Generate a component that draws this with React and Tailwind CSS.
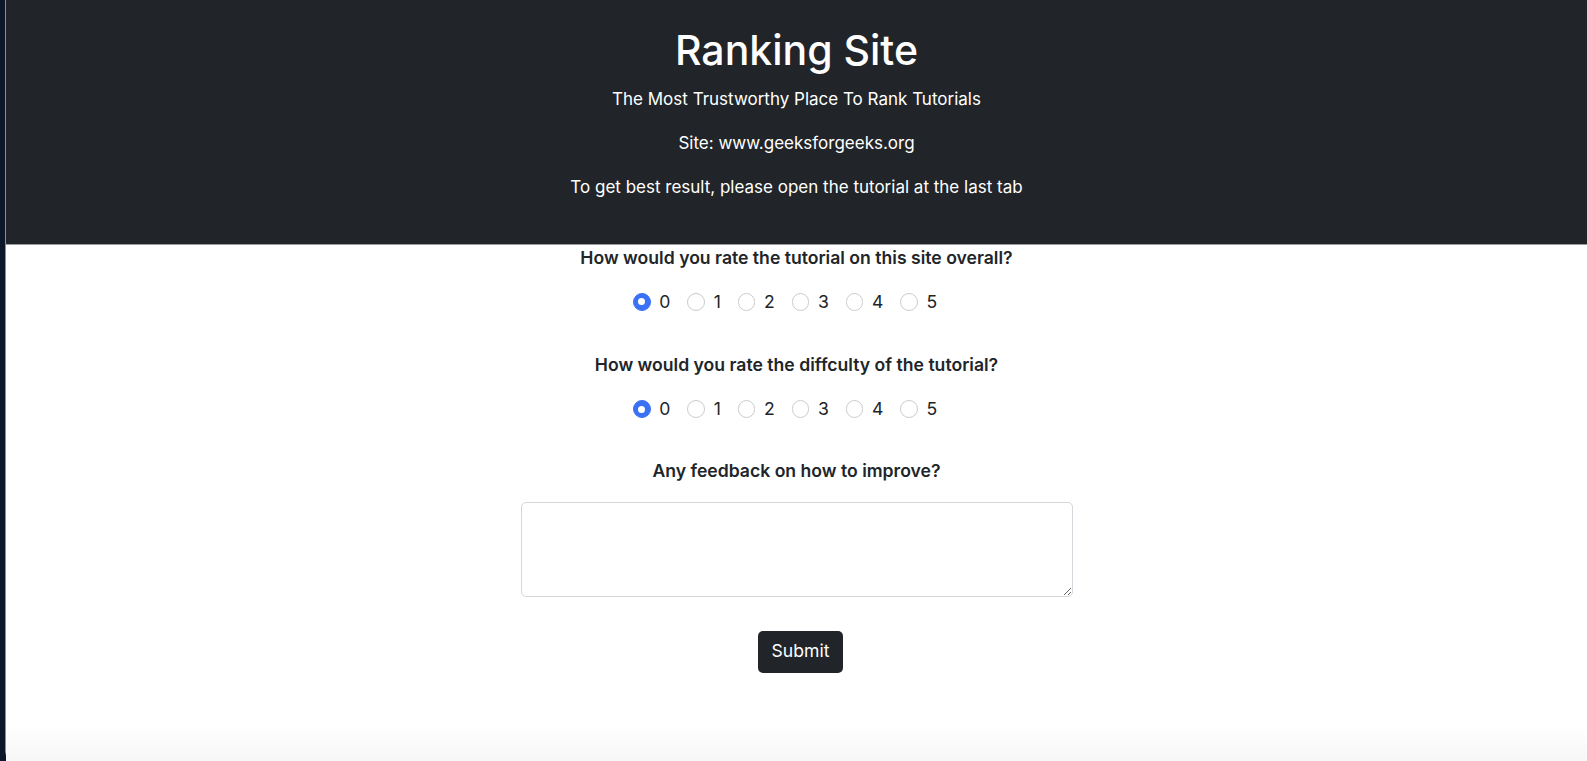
import { useState } from "react";

const FONT = { fontFamily: "Inter, 'Noto Sans', 'Liberation Sans', sans-serif" };
const SCORES = [0, 1, 2, 3, 4, 5];

function RadioRow({ name, value, onChange }) {
  return (
    <div className="mt-[17.6px] flex justify-center pr-[6px]">
      {SCORES.map((n) => (
        <label key={n} className="mr-[16.8px] flex items-center h-[26.4px] cursor-pointer">
          <span
            className={
              "w-[17.6px] h-[17.6px] rounded-full flex items-center justify-center " +
              (value === n
                ? "bg-[#3b71f5] border border-[#3b71f5]"
                : "bg-white border border-[#c9cbce]")
            }
          >
            {value === n ? <span className="w-[7px] h-[7px] rounded-full bg-white" /> : null}
          </span>
          <input
            type="radio"
            name={name}
            className="sr-only"
            checked={value === n}
            onChange={() => onChange(n)}
          />
          <span className="ml-[8.8px] text-[17.6px] leading-[26.4px] text-[#212529]">{n}</span>
        </label>
      ))}
    </div>
  );
}

export default function App() {
  const [overall, setOverall] = useState(0);
  const [difficulty, setDifficulty] = useState(0);
  const [feedback, setFeedback] = useState("");

  return (
    <div className="h-screen w-full bg-[#0c1729] overflow-hidden" style={FONT}>
      <div className="ml-[5px] h-full border-l border-[#8c8f94] bg-white rounded-b-[10px] flex flex-col">
        <header className="bg-[#212529] text-white text-center pt-[24px] pb-[26px] border-b border-[#9a9c9f]">
          <h1 className="text-[41px] leading-[52.8px] font-medium mb-[8.8px]">Ranking Site</h1>
          <p className="text-[17px] leading-[26.4px] mb-[17.6px]">The Most Trustworthy Place To Rank Tutorials</p>
          <p className="text-[17px] leading-[26.4px] mb-[17.6px]">Site: www.geeksforgeeks.org</p>
          <p className="text-[17px] leading-[26.4px] mb-[17.6px]">To get best result, please open the tutorial at the last tab</p>
        </header>

        <main className="flex-1 text-center text-[#212529] bg-gradient-to-b from-white from-[93%] to-[#f7f7f7]">
          <div className="font-semibold text-[17.6px] leading-[26.4px]">
            How would you rate the tutorial on this site overall?
          </div>
          <RadioRow name="overall" value={overall} onChange={setOverall} />

          <div className="mt-[37px] font-semibold text-[17.6px] leading-[26.4px]">
            How would you rate the diffculty of the tutorial?
          </div>
          <RadioRow name="difficulty" value={difficulty} onChange={setDifficulty} />

          <div className="mt-[35.2px] font-semibold text-[17.6px] leading-[26.4px]">
            Any feedback on how to improve?
          </div>
          <div className="mt-[17.6px] flex justify-center">
            <textarea
              rows={3}
              value={feedback}
              onChange={(e) => setFeedback(e.target.value)}
              className="w-[552px] h-[95px] block rounded-[5px] border border-[#d4d7db] px-[13px] py-[6.6px] text-[17.6px] outline-none"
            />
          </div>

          <div className="mt-[34px] flex justify-center">
            <button
              type="button"
              className="ml-[8px] h-[42px] px-[14px] rounded-[5px] bg-[#212529] text-white text-[17.6px]"
            >
              Submit
            </button>
          </div>
        </main>
      </div>
    </div>
  );
}
